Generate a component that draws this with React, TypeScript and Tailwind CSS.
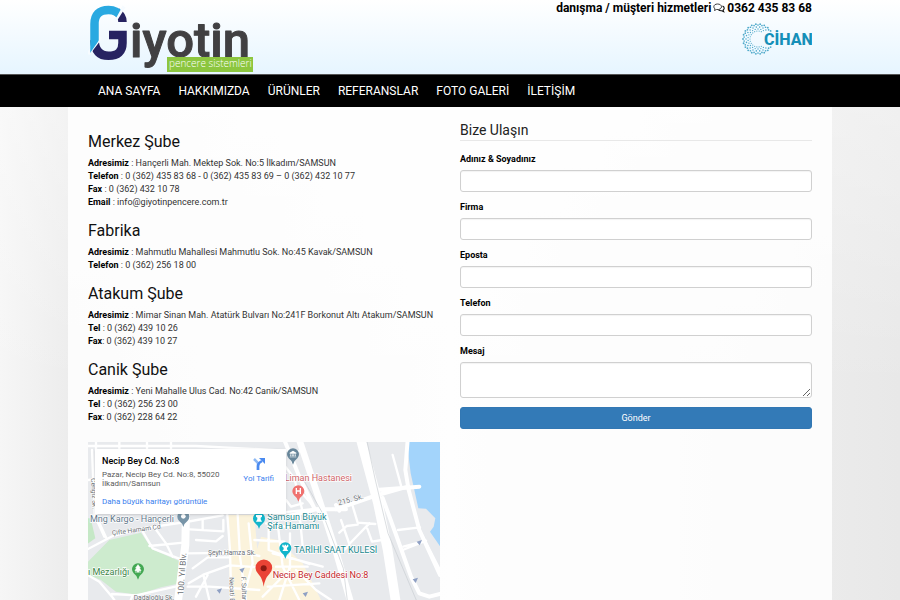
import React from "react";

type Line = { label: string; sep: string; value: string };
type Branch = { name: string; lines: Line[] };

const branches: Branch[] = [
  {
    name: "Merkez Şube",
    lines: [
      { label: "Adresimiz", sep: " : ", value: "Hançerli Mah. Mektep Sok. No:5 İlkadım/SAMSUN" },
      { label: "Telefon", sep: " : ", value: "0 (362) 435 83 68 - 0 (362) 435 83 69 – 0 (362) 432 10 77" },
      { label: "Fax", sep: " : ", value: "0 (362) 432 10 78" },
      { label: "Email", sep: " : ", value: "info@giyotinpencere.com.tr" },
    ],
  },
  {
    name: "Fabrika",
    lines: [
      { label: "Adresimiz", sep: " : ", value: "Mahmutlu Mahallesi Mahmutlu Sok. No:45 Kavak/SAMSUN" },
      { label: "Telefon", sep: " : ", value: "0 (362) 256 18 00" },
    ],
  },
  {
    name: "Atakum Şube",
    lines: [
      { label: "Adresimiz", sep: " : ", value: "Mimar Sinan Mah. Atatürk Bulvarı No:241F Borkonut Altı Atakum/SAMSUN" },
      { label: "Tel", sep: " : ", value: "0 (362) 439 10 26" },
      { label: "Fax", sep: ": ", value: "0 (362) 439 10 27" },
    ],
  },
  {
    name: "Canik Şube",
    lines: [
      { label: "Adresimiz", sep: " : ", value: "Yeni Mahalle Ulus Cad. No:42 Canik/SAMSUN" },
      { label: "Tel", sep: " : ", value: "0 (362) 256 23 00" },
      { label: "Fax", sep: ": ", value: "0 (362) 228 64 22" },
    ],
  },
];

const menu = ["ANA SAYFA", "HAKKIMIZDA", "ÜRÜNLER", "REFERANSLAR", "FOTO GALERİ", "İLETİŞİM"];

const fields = [
  { id: "name", label: "Adınız & Soyadınız", type: "text" },
  { id: "company", label: "Firma", type: "text" },
  { id: "email", label: "Eposta", type: "email" },
  { id: "phone", label: "Telefon", type: "tel" },
];

function Logo() {
  return (
    <svg width="166" height="72" viewBox="0 0 166 72" role="img" aria-label="Giyotin pencere sistemleri">
      <defs>
        <clipPath id="upper-blade">
          <path d="M0 0H38L27 20L14 36L1 54.500H0Z" />
        </clipPath>
      </defs>
      {/* two-tone blade emblem */}
      <g fill="none" strokeWidth="8.500">
        <path d="M29 12 Q34.500 16 34.500 22" stroke="#272361" />
        <path d="M6.500 40 Q7 55.800 20.500 55.800 Q34.500 55.800 34.500 43 V35 H21" stroke="#272361" />
        <path d="M0 54 L13 37 M27 20.500 L36 6.500" stroke="#f6fbff" strokeWidth="3.500" />
        <path d="M6.500 56 V24 Q6.500 10 20.500 10 Q29 10 34 17" stroke="#29a9e1" clipPath="url(#upper-blade)" />
      </g>
      <text x="42" y="57" fontFamily="Roboto, sans-serif" fontSize="49" fontWeight="500" fill="#414042" stroke="#414042" strokeWidth="1" strokeLinejoin="round">
        iyotin
      </text>
      <rect x="79" y="57" width="86" height="15" fill="#8cc63f" />
      <text x="81" y="67" fontFamily="'Open Sans', sans-serif" fontSize="10" fontWeight="300" fill="#fff">
        pencere sistemleri
      </text>
    </svg>
  );
}

function CihanLogo() {
  const dots: React.ReactElement[] = [];
  [8, 10, 12, 14, 15].forEach((r, ring) => {
    const count = 22;
    for (let i = 0; i < count; i++) {
      const a = ((i + (ring % 2) / 2) / count) * Math.PI * 2;
      const x = 16 + r * Math.cos(a);
      const y = 17 + r * Math.sin(a);
      if (x > 21 && y > 9 && y < 25) continue;
      dots.push(<circle key={`${ring}-${i}`} cx={x} cy={y} r={0.6 + ring * 0.08} />);
    }
  });
  return (
    <svg width="70" height="34" viewBox="0 0 70 34" role="img" aria-label="Cihan">
      <g fill="#4fa9ca">{dots}</g>
      <text x="22" y="23" fontFamily="Roboto, sans-serif" fontSize="16" fontWeight="800" fill="#158fb8">
        CİHAN
      </text>
    </svg>
  );
}

function Pin({ x, y, color, children }: { x: number; y: number; color: string; children?: React.ReactNode }) {
  return (
    <g transform={`translate(${x} ${y})`}>
      <path d="M0 32 Q-3 20 -13 13 A18 18 0 1 1 13 13 Q3 20 0 32Z" fill={color} />
      {children}
    </g>
  );
}

function StreetMap() {
  return (
    <svg className="block h-full w-full" viewBox="6 6 1056 474" preserveAspectRatio="xMinYMin slice" role="img" aria-label="Harita" fontFamily="Roboto, sans-serif">
      <rect width="1070" height="480" fill="#e8eaed" />
      <g fill="#fbf3dc">
        <path d="M425 225H505L515 345 480 480H432Z" />
        <path d="M525 290L575 300 650 370 705 480H480L500 370Z" />
      </g>
      <path d="M0 235H14L28 295 0 315Z" fill="#c5e8c6" />
      <path d="M70 300L165 278 198 328 278 362 272 432 225 442 155 464 90 455 45 420 6 405 6 365Z" fill="#cdebce" />
      <path d="M962 0L974 100 997 205 1020 206 1048 235 1043 260 1032 275 1070 330V0Z" fill="#a3d4fb" />
      <g fill="none" stroke="#fff" strokeLinejoin="round" strokeLinecap="round">
        <g strokeWidth="7">
          <path d="M6 18H330L640 34M30 6V235L55 290M100 6V26M183 6V30M255 6V30M18 30L26 230M6 120L26 118" />
          <path d="M0 330L80 288 165 266 300 246 410 226M205 262L240 310 260 350M190 318L292 308M165 266L200 325 285 358" />
          <path d="M0 402L40 425 78 470 92 490M78 462L150 466 285 436M35 238L62 296M140 466L130 490" />
          <path d="M312 268L412 274V240M350 270V238M330 300L390 304 410 288M302 340L470 338 520 348M320 385L365 352 430 352M308 430L352 404 430 376 520 382M352 404L370 480M305 440H370L520 450M330 470L365 405" />
          <path d="M424 225L432 330 436 480M455 225L462 350 480 480M488 250L500 370 470 480M505 300L595 305M540 250L610 262M548 270V330L670 372M575 250L590 380 640 480M612 280V385M610 385L580 480M610 390L530 470M560 340L710 380M630 390L690 450 735 480M570 380H665M545 440L700 430M640 215L650 320" />
          <path d="M590 70L625 115 650 215M600 180L615 200 650 190M585 218L700 205M640 150L705 225" />
          <path d="M800 198L815 248 868 252M760 278L782 258 815 254M765 240L790 312M790 312L850 250M844 266L858 305 888 300M790 315L775 330" />
          <path d="M936 270L1002 262M952 320L1020 302M920 45L946 140M998 265L1062 390M1020 302L950 330" />
        </g>
        <g strokeWidth="12">
          <path d="M595 0L640 110 685 205M750 208L865 168 965 140M760 212L750 195M870 150L1000 140M590 232L690 208 780 208" />
          <path d="M965 0L958 90 968 150 1000 270 1062 405M890 174L925 270 975 410 1000 460 1030 470 1062 462" />
        </g>
        <path d="M300 215L298 315 275 490" strokeWidth="24" />
        <path d="M640 0L700 180 750 335 795 490" strokeWidth="20" />
        <path d="M825 0L876 190 905 330 930 490" strokeWidth="29" />
      </g>
      <path d="M842 0L868 120 906 280 995 490M650 115L710 220 772 385 785 490" fill="none" stroke="#c9cdd2" strokeWidth="2" />
      <g fill="#8fa0c4">
        <path d="M992 305l16-5-7 16zM980 418l16-5-7 16zM650 460l16-5-7 16zM392 450l16-5-7 16zM460 388l16-5-7 16z" />
      </g>

      <g fill="#6b7075" fontSize="20" stroke="#fff" strokeWidth="3" paintOrder="stroke">
        <text transform="translate(79 286) rotate(-8)">Çifte Hamam Cd.</text>
        <text x="366" y="346">Şeyh Hamza Sk.</text>
        <text transform="translate(758 196) rotate(-15)" fontSize="22">215. Sk.</text>
        <text transform="translate(292 466) rotate(-86)" fontSize="25">100. Yıl Blv.</text>
        <text transform="translate(430 412) rotate(88)">Necati Bey</text>
        <text transform="translate(466 410) rotate(88)">F. Sultan</text>
        <text x="143" y="480">Dadaloğlu Sk.</text>
        <text transform="translate(15 115) rotate(87)">Cengiz Sk.</text>
      </g>

      <g stroke="#fff" strokeWidth="4" paintOrder="stroke" fontSize="27">
        <text x="12" y="245" fill="#64798c">Mng Kargo - Hançerli</text>
        <text x="6" y="405" fill="#3a8446">ı Mezarlığı</text>
        <text x="596" y="123" fill="#cf6468">Liman Hastanesi</text>
        <text x="544" y="239" fill="#21898f">Samsun Büyük</text>
        <text x="544" y="266" fill="#21898f">Şifa Hamamı</text>
        <text x="624" y="340" fill="#21898f">TARİHİ SAAT KULESİ</text>
        <text x="560" y="414" fill="#c5282b">Necip Bey Caddesi No:8</text>
      </g>

      <Pin x={292} y={229} color="#7895a8"><circle r="7" fill="#fff" /></Pin>
      <Pin x={156} y={387} color="#43a853"><path d="M0-13L7-3H4L9 5H2V9H-2V5H-9L-4-3H-7ZM-9 9H9" fill="#fff" stroke="#fff" strokeWidth="2" /></Pin>
      <Pin x={621} y={42} color="#68869a"><path d="M-10-4L0-10 10-4V-1H-10ZM-8 1H-5V7H-8ZM-2 1H2V7H-2ZM5 1H8V7H5ZM-10 8H10V10H-10Z" fill="#fff" /></Pin>
      <Pin x={637} y={153} color="#f0716f"><path d="M-6-9V9M6-9V9M-6 0H6" stroke="#fff" strokeWidth="4" /></Pin>
      <Pin x={519} y={235} color="#12b5cb"><path d="M-9-10H9V-5L5-2V3L9 10H-9L-5 3V-2L-9-5Z" fill="#fff" /></Pin>
      <Pin x={598} y={324} color="#12b5cb"><path d="M-9-10H-5V-7H-2V-10H2V-7H5V-10H9V-4L5-1V4L9 9H-9L-5 4V-1L-9-4Z" fill="#fff" /></Pin>
      <path d="M533 440Q530 416 517 402A25 25 0 1 1 550 402Q536 416 533 440Z" fill="#ea4335" />
      <circle cx="533" cy="385" r="9" fill="#8c1a12" />
    </svg>
  );
}

function MapCard() {
  return (
    <div className="absolute left-[7px] top-[7px] flex h-[65px] w-[191px] justify-between bg-white pb-1 pl-[7px] pr-3 pt-[6px] shadow-sm">
      <div className="whitespace-nowrap">
        <p className="text-[9px] font-medium leading-[12px] text-black">Necip Bey Cd. No:8</p>
        <p className="mt-[3px] text-[8px] leading-[9px] text-[#5b5b5b]">
          Pazar, Necip Bey Cd. No:8, 55020
          <br />
          İlkadım/Samsun
        </p>
        <a href="#harita" className="mt-[9px] block text-[8px] leading-[10px] text-[#3a80ee]">
          Daha büyük haritayı görüntüle
        </a>
      </div>
      <a href="#yol" className="flex flex-col items-center gap-1 pt-[3px] text-[8px] leading-[10px] text-[#3a80ee]">
        <svg width="12" height="12" viewBox="0 0 12 12" fill="none" aria-hidden="true">
          <path d="M1 1L5 5V12" stroke="#8db8f3" strokeWidth="2.500" />
          <path d="M5 12V8Q5 5 9 3" stroke="#4a8af0" strokeWidth="2.500" />
          <path d="M6 0H12V6Z" fill="#4a8af0" />
        </svg>
        <span>Yol Tarifi</span>
      </a>
    </div>
  );
}

const control =
  "block w-full rounded-[3px] border border-[#d0d0d0] bg-white px-2 text-[9px] shadow-[inset_0_1px_1px_rgba(0,0,0,0.05)] outline-none focus:border-[#66afe9]";

export default function App() {
  return (
    <div className="flex min-h-screen flex-col bg-[linear-gradient(to_bottom,rgba(255,255,255,0.5),rgba(255,255,255,0)_65%),linear-gradient(to_right,#f6f6f6_0%,#ececec_8%,#f5f5f5_50%,#ebebeb_92%,#e8e8e8_100%)] font-['Roboto',sans-serif] text-[9px] leading-[13px] text-[#333]">
      <header className="h-[75px] border-b border-[#555] bg-linear-to-b from-white to-[#e6f5ff]">
        <div className="mx-auto flex h-full max-w-[764px] items-start justify-between px-5">
          <a href="#anasayfa">
            <Logo />
          </a>
          <div className="flex flex-col items-end">
            <p className="flex items-center gap-[2px] text-[12px] font-bold leading-[16px] text-black">
              danışma / müşteri hizmetleri
              <svg width="12" height="12" viewBox="0 0 12 12" fill="none" stroke="#111" aria-hidden="true">
                <path d="M4.500 2C2.300 2 .8 3.200.8 4.800c0 .9.500 1.600 1.200 2.100L1.500 8.500l2-1c3 .4 5-.9 5-2.700C8.500 3.200 6.900 2 4.500 2Z" strokeWidth=".8" />
                <path d="M9.500 4c1 .4 1.700 1.200 1.700 2.200 0 .8-.4 1.400-1.100 1.900l.6 1.600-2-1c-1.300.1-2.300-.1-3.200-.6" strokeWidth="1.100" />
              </svg>
              0362 435 83 68
            </p>
            <div className="mt-[6px]">
              <CihanLogo />
            </div>
          </div>
        </div>
      </header>

      <nav className="bg-black">
        <ul className="mx-auto flex h-8 max-w-[764px] items-center px-[21px]">
          {menu.map((item) => (
            <li key={item}>
              <a href="#menu" className="block px-[9px] text-[12px] leading-[16px] text-white">
                {item}
              </a>
            </li>
          ))}
        </ul>
      </nav>

      <main className="mx-auto grid w-full max-w-[764px] flex-1 grid-cols-2 gap-5 bg-white/85 px-5">
        <section className="pt-[13px]">
          {branches.map((b) => (
            <div key={b.name} className="pt-[13px]">
              <h2 className="mb-[6px] text-[16px] leading-[18px] text-[#111]">{b.name}</h2>
              {b.lines.map((l) => (
                <p key={l.label} className="whitespace-nowrap">
                  <strong className="font-bold text-black">{l.label}</strong>
                  {l.sep}
                  {l.value}
                </p>
              ))}
            </div>
          ))}
          <div className="relative mt-[18px] h-[158px] overflow-hidden">
            <StreetMap />
            <MapCard />
          </div>
        </section>

        <section className="pt-[14px]">
          <h2 className="border-b border-[#e8e8e8] pb-[1px] text-[14px] leading-[18px] text-[#222]">Bize Ulaşın</h2>
          <form className="pt-3" onSubmit={(e) => e.preventDefault()}>
            {fields.map((f) => (
              <div key={f.id} className="mb-[9px]">
                <label htmlFor={f.id} className="mb-1 block font-bold text-black">
                  {f.label}
                </label>
                <input id={f.id} type={f.type} className={`${control} h-[22px]`} />
              </div>
            ))}
            <div className="mb-[9px]">
              <label htmlFor="message" className="mb-1 block font-bold text-black">
                Mesaj
              </label>
              <textarea id="message" className={`${control} h-9 resize-y`} />
            </div>
            <button type="submit" className="block h-[22px] w-full rounded-[3px] border border-[#3277b3] bg-[#337ab7] text-[9px] text-white">
              Gönder
            </button>
          </form>
        </section>
      </main>
    </div>
  );
}
